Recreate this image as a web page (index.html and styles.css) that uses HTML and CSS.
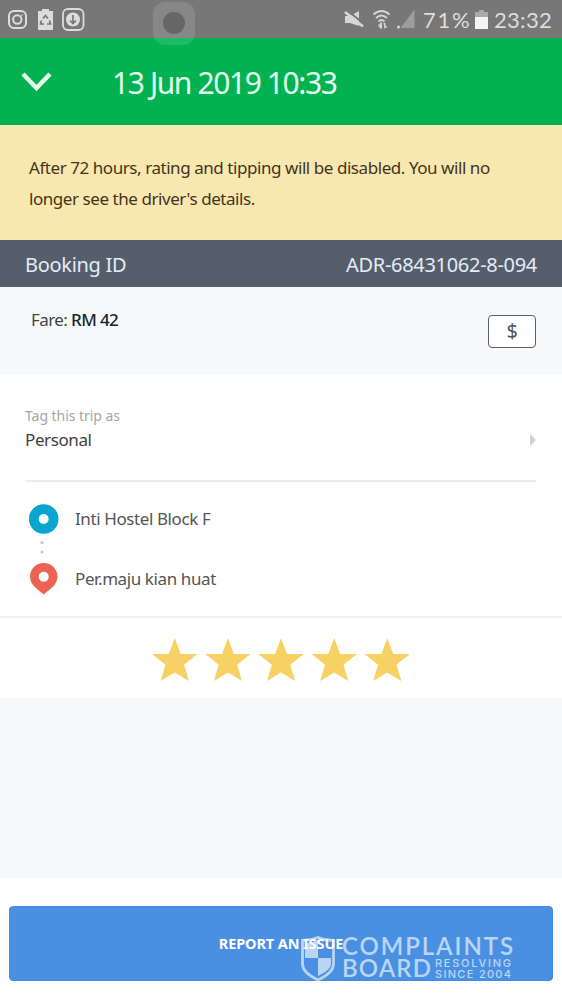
FILE: index.html
```
<!DOCTYPE html>
<html lang="en">
<head>
<meta charset="utf-8">
<title>Trip details</title>
<link rel="stylesheet" href="styles.css">
</head>
<body>
<main class="screen">
  <div class="status">
    <svg class="status-left" width="100" height="38" viewBox="0 0 100 38" fill="none" stroke="#dcdcdc">
      <rect x="9" y="11" width="17" height="17" rx="5" stroke-width="2"/>
      <circle cx="17.3" cy="19.5" r="4.2" stroke-width="2"/><circle cx="22" cy="15" r=".8" fill="#dcdcdc" stroke="none"/>
      <path d="M38 11h4V9h7v2h4v19H38z" fill="#dcdcdc" stroke="none"/>
      <path d="M43 18.500l2.500-3 2.500 3M41.500 20.500l-1 3.500h3.500M49.500 20.500l1 3.500H47" stroke="#777" stroke-width="1.7"/>
      <rect x="63" y="9" width="20.500" height="21" rx="5" stroke-width="1.8"/>
      <circle cx="73" cy="19.500" r="7" fill="#dcdcdc" stroke="none"/>
      <path d="M73 15v8M70 20.500l3 3 3-3" stroke="#777" stroke-width="1.7"/>
    </svg>
    <div class="status-right">
      <svg width="80" height="38" viewBox="0 0 80 38" fill="#d6d6d6">
        <path d="M5 16h5l9-5v15l-9-3H5z"/>
        <path d="M6 9.500l19 15" stroke="#777" stroke-width="2"/><path d="M5 12l18 14.500" stroke="#d6d6d6" stroke-width="2.600"/>
        <g fill="none" stroke="#d6d6d6" stroke-width="1.800"><path d="M33.500 14.500q8-7 16 0M36 18q5.500-5 11 0M38.500 21.500q3-3 6 0"/></g>
        <path d="M38 24.500h2V22.500h2v6h-2zM43.500 23h2v3h2l-3 3z"/>
        <path d="M74.500 9.500V28H60.500z" fill="#9d9d9d"/><circle cx="58.500" cy="27" r="1.600"/>
      </svg>
      <span class="battery-text">71%</span>
      <svg class="battery" width="13" height="38" viewBox="0 0 13 38"><path d="M0 12h4v-2h5v2h4v6H0z" fill="#aaa"/><path d="M0 17h13v12H0z" fill="#f5f5f5"/></svg>
      <span class="clock">23:32</span>
    </div>
    <svg class="assist" width="42" height="43" viewBox="0 0 42 43"><rect width="42" height="43" rx="12" fill="#fff" fill-opacity=".12"/><circle cx="21" cy="21" r="11" fill="#666"/></svg>
  </div>
  <header class="header">
    <svg class="chevron" width="32" height="22" viewBox="0 0 32 22"><path d="M3 3L16.500 17 30 3" fill="none" stroke="#e6ffe9" stroke-width="4.500"/></svg>
    <h1 class="title">13 Jun 2019 10:33</h1>
  </header>
  <p class="notice"><span class="notice-a">After 72 hours, rating and tipping will be disabled. You will no</span><br><span class="notice-b">longer see the driver's details.</span></p>
  <div class="booking"><span class="booking-label">Booking ID</span><span class="booking-id">ADR-68431062-8-094</span></div>
  <section class="fare"><div class="fare-text">Fare: <b>RM 42</b></div><div class="cash">$</div></section>
  <section class="tag">
    <div><div class="tag-label">Tag this trip as</div><div class="tag-value">Personal</div></div>
    <svg class="arrow" width="6" height="12" viewBox="0 0 6 12"><path d="M0 0l6 6-6 6z" fill="#d0d0d0"/></svg>
  </section>
  <section class="route">
    <svg width="30" height="94" viewBox="0 0 30 94">
      <circle cx="14.700" cy="15" r="14.800" fill="#08a5cf"/><circle cx="14.700" cy="15" r="5" fill="#fff"/>
      <circle cx="13" cy="38.500" r="1.500" fill="#c4c4c4"/><circle cx="13" cy="48" r="1.500" fill="#c4c4c4"/>
      <path d="M14.700 59C7 59 1 65 1 72.500c0 8 6.500 12 13.700 18 7.200-6 13.800-10 13.800-18C28.500 65 22.500 59 14.700 59z" fill="#ec6353"/><circle cx="14.700" cy="72.800" r="5" fill="#fff"/>
    </svg>
    <div class="stops"><div class="stop-a">Inti Hostel Block F</div><div class="stop-b">Per.maju kian huat</div></div>
  </section>
  <section class="rating">
    <svg class="stars" width="260" height="45" viewBox="0 0 260 45" fill="#f8d165">
      <defs><path id="star" d="M22.700 0l6 16H45.500L32 26.700l4.800 16.300-14.100-8.500L8.700 43l4.800-16.300L0 16h16.800z"/></defs>
      <use href="#star"/><use href="#star" x="53.200"/><use href="#star" x="106.300"/><use href="#star" x="159.500"/><use href="#star" x="212.500"/>
    </svg>
  </section>
  <div class="spacer"></div>
  <footer class="footer"><button class="report"><span>REPORT AN ISSUE</span></button></footer>
  <svg class="watermark" width="216" height="50" viewBox="0 0 216 50" fill="#fff">
    <path d="M18 2.500C12 5 6 5.500 2.500 5.500V29c0 7 7 12 15.500 16 8.500-4 15.500-9 15.500-16V5.500C30 5.500 24 5 18 2.500z" fill="none" stroke="#fff" stroke-width="2.800"/>
    <path d="M5 8q7 0 13-3v18H5zM18 23h13v6c0 5-7 9-13 12z"/>
    <g class="watermark-name"><text x="42" y="19.500" textLength="171">COMPLAINTS</text><text x="42" y="42" textLength="89">BOARD</text></g>
    <g class="watermark-sub"><text x="135" y="31.500" textLength="76">RESOLVING</text><text x="135" y="42.500" textLength="76">SINCE 2004</text></g>
  </svg>
</main>
</body>
</html>
```
FILE: styles.css
```
body { margin: 0; font-family: "Noto Sans", sans-serif; background: #fff; }
.screen { position: relative; width: 562px; height: 1000px; display: flex; flex-direction: column; overflow: hidden; }
.screen > * { flex-shrink: 0; box-sizing: border-box; }
span { white-space: nowrap; }
.status { position: relative; height: 38px; background: #777; display: flex; justify-content: space-between; color: #dedede; }
.status svg { display: block; flex-shrink: 0; }
.status-right { display: flex; width: 222px; font: 22px/39px Lato, sans-serif; }
.battery-text { width: 55px; flex-shrink: 0; padding-left: 3px; box-sizing: border-box; letter-spacing: 1.800px; }
.clock { padding-left: 6px; letter-spacing: .3px; }
.status .assist { position: absolute; left: 153px; top: 2px; z-index: 1; }
.header { height: 87px; background: #02b150; display: flex; align-items: center; }
.chevron { margin-left: 20px; }
.title { margin: 0 0 0 60px; padding-top: 3px; font-weight: 400; font-size: 30px; line-height: 40px; color: #e2fff0; letter-spacing: -1.400px; white-space: nowrap; }
.notice { margin: 0; height: 115px; padding: 28px 29px; background: #f8e8b0; color: #44341c; font-size: 17px; line-height: 30.500px; letter-spacing: -.44px; }
.booking { height: 47px; padding: 1px 25px 0; background: #565e6b; color: #e3ecf8; display: flex; justify-content: space-between; align-items: center; font-size: 20px; letter-spacing: -.3px; }
.fare { height: 88px; padding: 18px 26px 0 31px; background: linear-gradient(#f5f9fc, #f8f9fb); display: flex; justify-content: space-between; font-size: 17px; line-height: 30px; color: #444; letter-spacing: -.6px; }
.fare b { font-weight: 500; color: #20242a; }
.cash { margin-top: 10px; box-sizing: border-box; width: 48px; height: 33px; border: 1.500px solid #606060; border-radius: 4px; background: #fff; text-align: center; font-size: 20px; line-height: 30px; color: #555; }
.tag { height: 107px; margin: 0 26px 0 25px; border-bottom: 2px solid #ededed; display: flex; justify-content: space-between; padding-top: 29px; }
.tag-label { font-size: 14px; line-height: 24px; color: #a5a5a5; letter-spacing: -.05px; }
.tag-value { font-size: 17px; line-height: 24px; color: #404040; letter-spacing: -.4px; }
.arrow { margin-top: 30px; }
.route { height: 136px; padding: 22px 0 0 29px; border-bottom: 2px solid #efefef; display: flex; gap: 16px; color: #555; font-size: 17px; letter-spacing: -.4px; }
.stops { display: grid; grid-template-rows: 30px 30px; row-gap: 30px; line-height: 30px; }
.rating { height: 80px; padding: 20px 0 0 152px; }
.stars { display: block; }
.spacer { height: 180px; background: #f6f8f9; }
.footer { height: 122px; padding: 28px 9px 19px; }
.report { display: block; width: 544px; height: 75px; padding: 0; border: 1px solid #428be0; border-radius: 4px; background: #4990e3; color: #fff; font: 700 14.500px/73px "Noto Sans", sans-serif; letter-spacing: -.1px; }
.watermark { position: absolute; left: 300px; top: 935px; opacity: .62; }
.watermark-name { font: 600 24px Lato, sans-serif; }
.watermark-sub { font: 500 11px Inter, sans-serif; }
```
